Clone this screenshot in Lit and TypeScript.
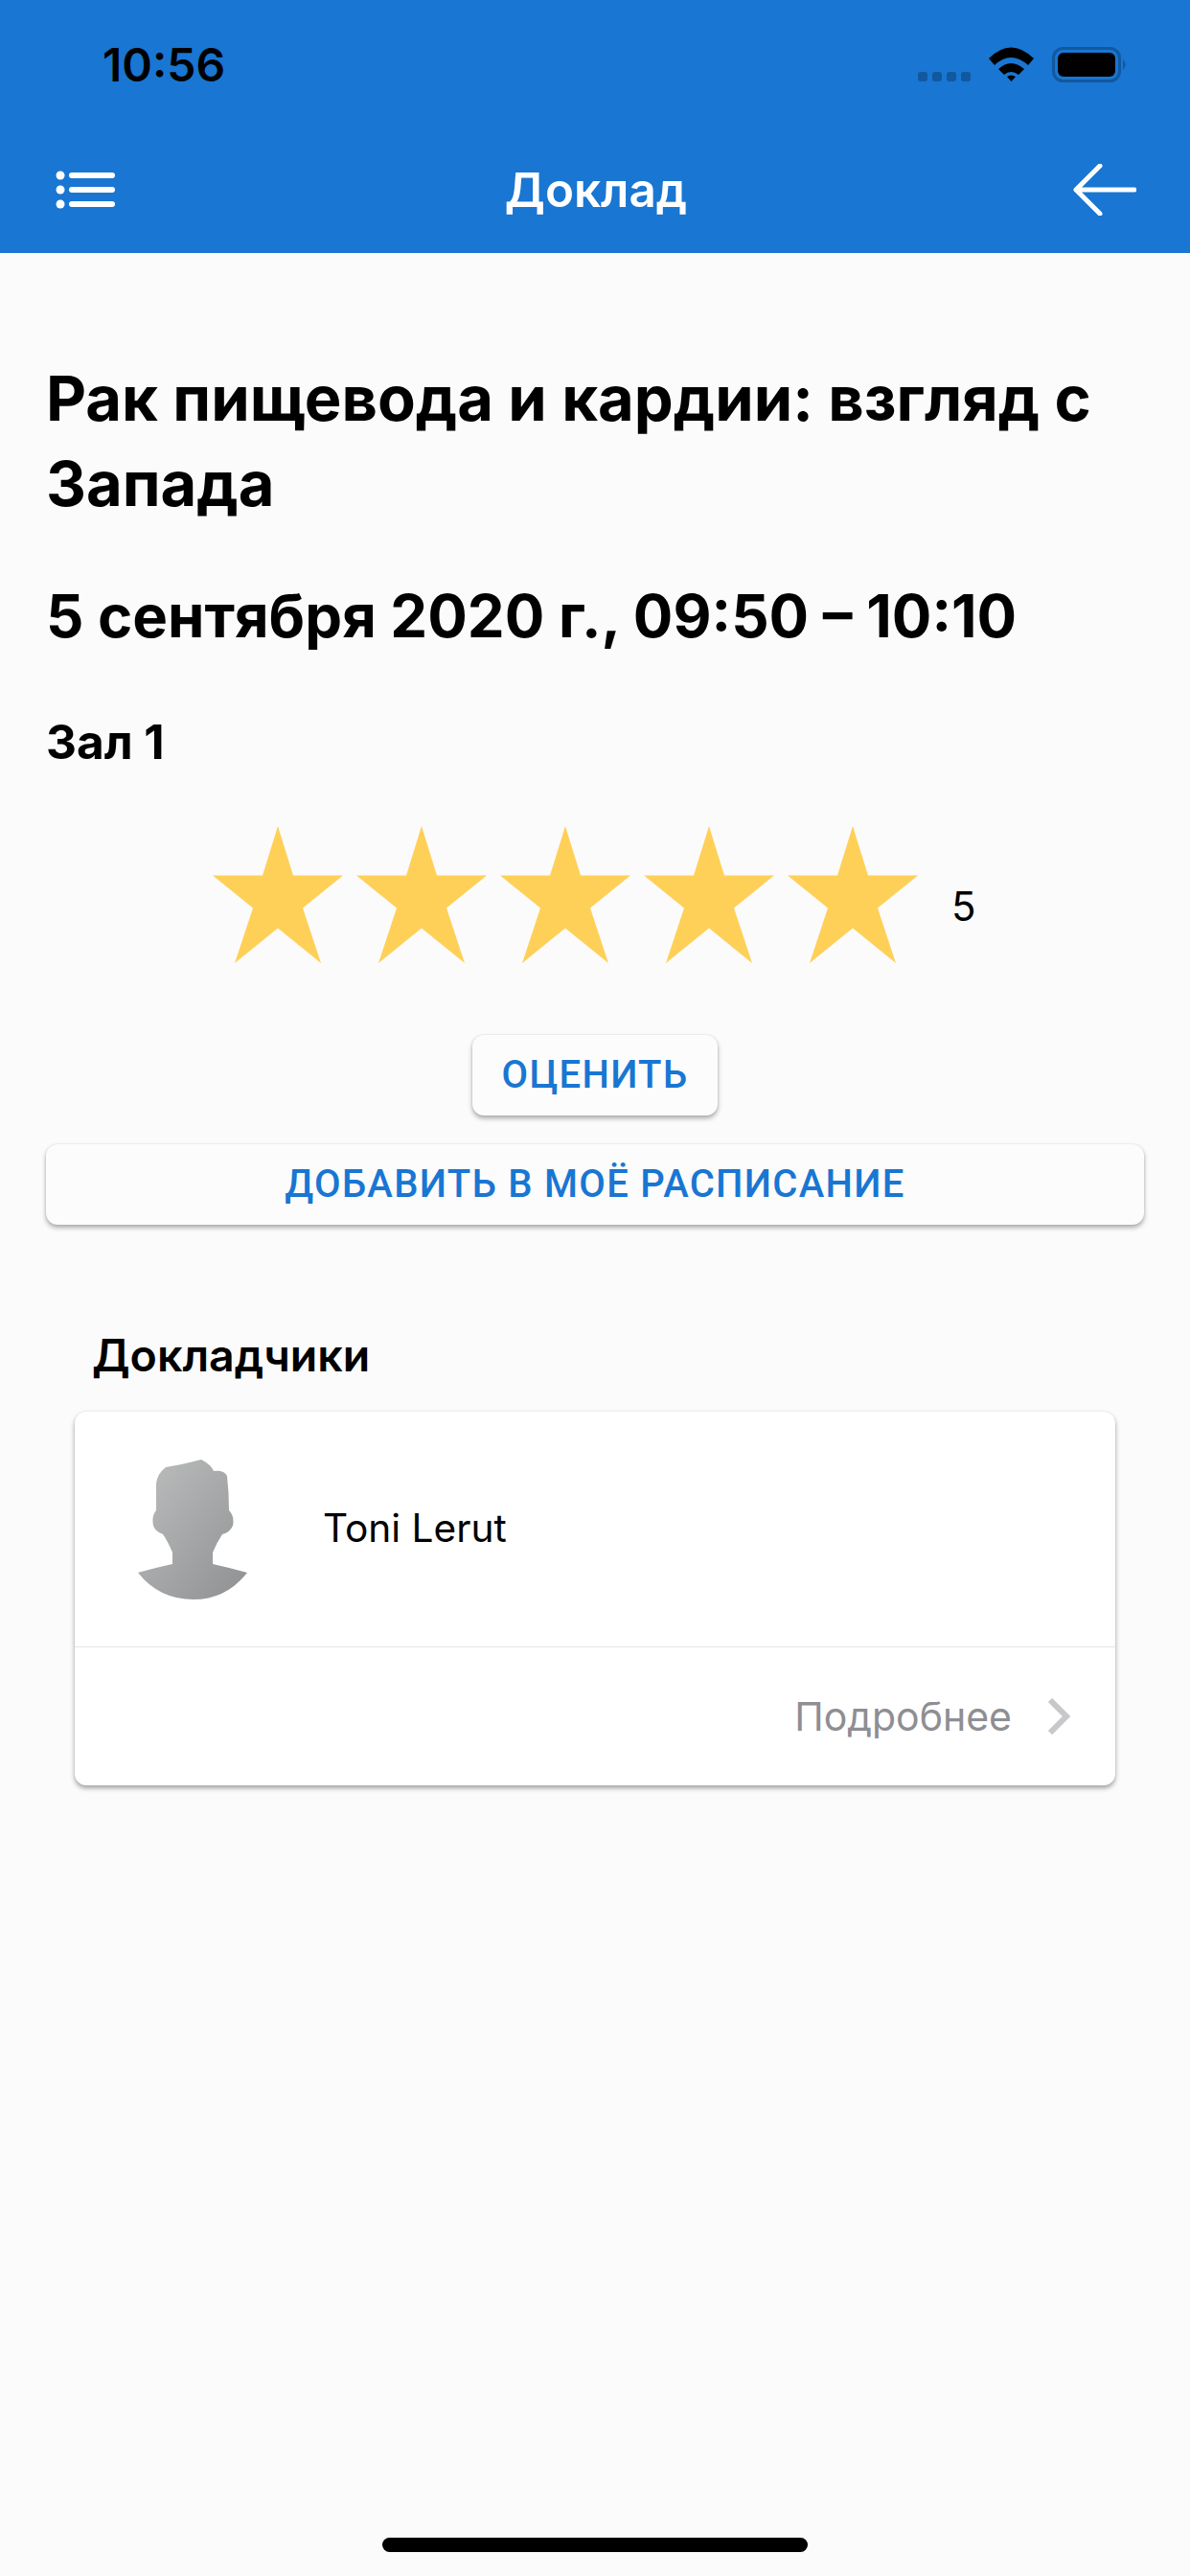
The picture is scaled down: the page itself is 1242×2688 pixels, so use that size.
import { LitElement, html, css, svg } from 'lit';
import { customElement } from 'lit/decorators.js';

const star = svg`<polygon points="68,0 84,122 136,122 94,202 113,338 68,252 23,338 42,202 0,122 52,122" fill="#ffd058"></polygon>`;

@customElement('app-root')
export class AppRoot extends LitElement {
  static styles = css`
    :host {
      display: block;
      width: 1242px;
      height: 2688px;
      background: #fbfbfb;
      font-family: Inter, 'Noto Sans', sans-serif;
      color: #000;
      overflow: hidden;
    }
    .header {
      height: 264px;
      background: #1976d2;
      display: flex;
      flex-direction: column;
    }
    .status {
      height: 132px;
      display: flex;
      align-items: center;
      justify-content: space-between;
      padding: 6px 65px 0 107px;
      box-sizing: border-box;
    }
    .time {
      font-size: 48px;
      font-weight: 600;
      margin-top: -4px;
    }
    .status-icons {
      display: flex;
      align-items: center;
    }
    .nav {
      height: 132px;
      display: flex;
      align-items: center;
      justify-content: space-between;
      padding: 0 56px 0 58px;
    }
    .nav-title {
      color: #fff;
      font-size: 49.400px;
      font-weight: 600;
    }
    .content {
      padding: 0 48px;
      display: flex;
      flex-direction: column;
    }
    .title {
      margin: 107px 0 0;
      font-size: 65px;
      line-height: 89px;
      font-weight: 700;
    }
    .date {
      margin: 54px 0 0;
      font-size: 61.700px;
      line-height: 80px;
      font-weight: 700;
    }
    .hall {
      margin: 61px 0 0;
      font-size: 49.500px;
      line-height: 60px;
      font-weight: 700;
    }
    .rating {
      margin-top: 58px;
      display: flex;
      align-items: center;
      gap: 14px;
      padding-left: 174px;
    }
    .rating-value {
      margin: 24px 0 0 21px;
      font-size: 42px;
    }
    .btn {
      display: flex;
      align-items: center;
      justify-content: center;
      height: 84px;
      padding-bottom: 2px;
      box-sizing: border-box;
      border-radius: 12px;
      background: #fcfcfc;
      color: #1976d2;
      font-family: Roboto, sans-serif;
      font-size: 40px;
      font-weight: 500;
      letter-spacing: 1.300px;
      box-shadow: 0 3px 5px rgba(0, 0, 0, 0.32), 0 0 2px rgba(0, 0, 0, 0.12);
    }
    .rate {
      width: 256px;
      margin: 75px auto 0;
    }
    .add {
      margin-top: 30px;
    }
    .speakers {
      padding: 0 30px;
      margin-top: 106px;
    }
    .speakers-title {
      font-size: 46.500px;
      font-weight: 600;
      line-height: 60px;
      padding-left: 18px;
    }
    .card {
      margin-top: 29px;
      background: #fff;
      border-radius: 12px;
      box-shadow: 0 3px 5px rgba(0, 0, 0, 0.35), 0 0 2px rgba(0, 0, 0, 0.1);
    }
    .card-top {
      height: 245px;
      display: flex;
      align-items: center;
      gap: 79px;
      padding-left: 66px;
      border-bottom: 1px solid #e6e6e6;
    }
    .name {
      font-size: 40.600px;
      margin-top: -3px;
    }
    .card-bottom {
      height: 144px;
      display: flex;
      align-items: center;
      justify-content: flex-end;
      gap: 37px;
      padding-right: 47px;
      color: #8e8e93;
      font-size: 41px;
    }
    .home {
      position: absolute;
      left: 399px;
      top: 2648px;
      width: 444px;
      height: 15px;
      border-radius: 8px;
      background: #000;
    }
  `;

  render() {
    return html`
      <div class="header">
        <div class="status">
          <span class="time">10:56</span>
          <div class="status-icons">
            <svg width="219" height="40" viewBox="0 0 219 40">
              <g fill="#12589f">
                <rect x="0" y="26" width="10" height="10" rx="3"></rect>
                <rect x="15" y="26" width="10" height="10" rx="3"></rect>
                <rect x="30" y="26" width="10" height="10" rx="3"></rect>
                <rect x="45" y="26" width="10" height="10" rx="3"></rect>
              </g>
              <path d="M74 12 Q97 -11 121 12 L115 19 Q97 3 80 19Z M84 23 Q97 11 111 23 L105 29 Q97 23 90 29Z M93 31 Q97 28 102 31 L97.500 36Z" fill="#000"></path>
              <rect x="141.500" y="1.500" width="69" height="34" rx="10" fill="none" stroke="#12589f" stroke-width="3"></rect>
              <rect x="146" y="6" width="60" height="25" rx="6" fill="#000"></rect>
              <path d="M214 13 Q219 18.500 214 24Z" fill="#12589f"></path>
            </svg>
          </div>
        </div>
        <div class="nav">
          <svg width="66" height="42" viewBox="0 0 66 42">
            <g fill="#fff">
              <circle cx="5" cy="6" r="4.500"></circle>
              <circle cx="5" cy="21" r="4.500"></circle>
              <circle cx="5" cy="36" r="4.500"></circle>
              <rect x="14" y="3" width="48" height="6" rx="3"></rect>
              <rect x="14" y="18" width="48" height="6" rx="3"></rect>
              <rect x="14" y="33" width="48" height="6" rx="3"></rect>
            </g>
          </svg>
          <span class="nav-title">Доклад</span>
          <svg width="66" height="54" viewBox="0 0 66 54" fill="none" stroke="#fff" stroke-width="5" stroke-linecap="round" stroke-linejoin="round">
            <path d="M64 27 H3 M28 2 L3 27 L28 52"></path>
          </svg>
        </div>
      </div>

      <div class="content">
        <h1 class="title">Рак пищевода и кардии: взгляд с Запада</h1>
        <div class="date">5 сентября 2020 г., 09:50 – 10:10</div>
        <div class="hall">Зал 1</div>
        <div class="rating">
          ${[1, 2, 3, 4, 5].map(() => html`<svg width="136" height="143" viewBox="0 0 136 338" preserveAspectRatio="none">${star}</svg>`)}
          <span class="rating-value">5</span>
        </div>
        <div class="btn rate">ОЦЕНИТЬ</div>
        <div class="btn add">ДОБАВИТЬ В МОЁ РАСПИСАНИЕ</div>
        <div class="speakers">
          <div class="speakers-title">Докладчики</div>
          <div class="card">
            <div class="card-top">
              <svg width="114" height="146" viewBox="24 25 114 146">
                <defs>
                  <linearGradient id="avatar" x1="0" y1="0" x2="1" y2="1">
                    <stop offset="0" stop-color="#bdbebe"></stop>
                    <stop offset="1" stop-color="#8f9092"></stop>
                  </linearGradient>
                </defs>
                <path fill="url(#avatar)" d="M24 143 Q46 137 60 134 L60 122 Q55 110 50 103 Q42 100 40 94 Q38 84 43 78 L43 50 Q44 40 53 33 Q72 30 90 25 Q100 30 103 37 Q114 36 117 42 Q119 60 119 78 Q125 84 123 94 Q120 101 112 103 Q106 112 102 122 L102 134 Q120 138 138 143 Q116 171 82 171 Q46 171 24 143Z"></path>
              </svg>
              <span class="name">Toni Lerut</span>
            </div>
            <div class="card-bottom">
              <span>Подробнее</span>
              <svg width="24" height="38" viewBox="0 0 24 38" fill="none" stroke="#c7c7cc" stroke-width="6" stroke-linejoin="miter">
                <path d="M3 2 L20 19 L3 36"></path>
              </svg>
            </div>
          </div>
        </div>
      </div>
      <div class="home"></div>
    `;
  }
}
